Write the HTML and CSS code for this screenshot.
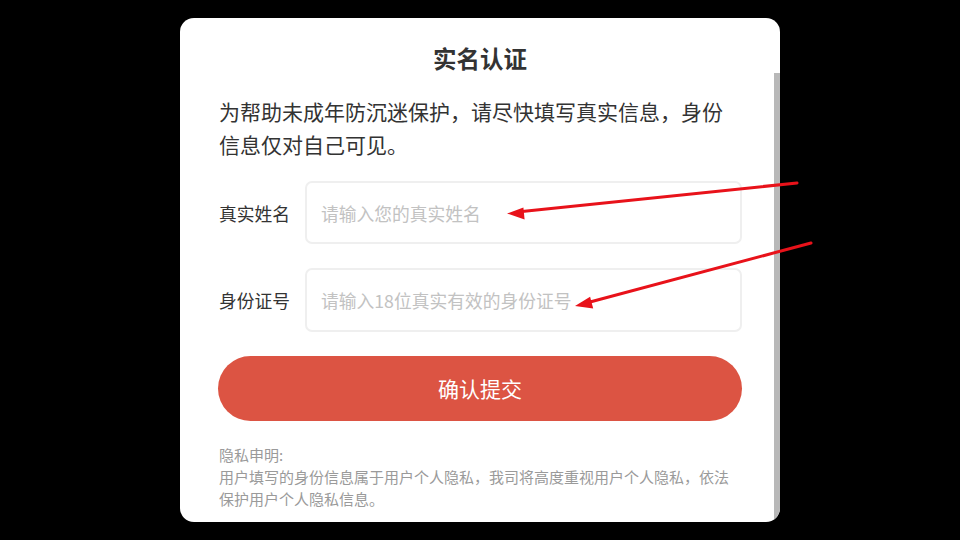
FILE: index.html
```html
<!DOCTYPE html>
<html lang="zh-CN">
<head>
<meta charset="utf-8">
<title>实名认证</title>
<link rel="stylesheet" href="styles.css">
</head>
<body>
<div class="stage">
  <div class="card">
    <h1 class="title">实名认证</h1>
    <p class="intro">为帮助未成年防沉迷保护，请尽快填写真实信息，身份信息仅对自己可见。</p>
    <div class="form">
      <div class="row">
        <label class="label">真实姓名</label>
        <div class="field"><span class="placeholder">请输入您的真实姓名</span></div>
      </div>
      <div class="row">
        <label class="label">身份证号</label>
        <div class="field"><span class="placeholder">请输入18位真实有效的身份证号</span></div>
      </div>
      <button class="submit">确认提交</button>
    </div>
    <div class="privacy">
      <div>隐私申明:</div>
      <div>用户填写的身份信息属于用户个人隐私，我司将高度重视用户个人隐私，依法保护用户个人隐私信息。</div>
    </div>
    <div class="scrollbar"></div>
  </div>
  <svg class="arrows" width="960" height="540" viewBox="0 0 960 540">
    <g fill="#e8121a" stroke="#e8121a">
      <line x1="797" y1="183" x2="522" y2="211.5" stroke-width="3" stroke-linecap="round"/>
      <polygon points="507,213.5 524.6,219.4 523.4,207.4" stroke="none"/>
      <line x1="811" y1="243" x2="590" y2="302" stroke-width="3" stroke-linecap="round"/>
      <polygon points="575,306 593.2,308.4 590.1,296.8" stroke="none"/>
    </g>
  </svg>
</div>
</body>
</html>
```

FILE: styles.css
```css
* { box-sizing: border-box; }
html, body {
  margin: 0;
  padding: 0;
  background: #000;
  font-family: "Noto Sans CJK SC", "Noto Sans", sans-serif;
}
.stage {
  position: relative;
  width: 960px;
  height: 540px;
  overflow: hidden;
  padding-top: 18px;
}
.card {
  position: relative;
  width: 600px;
  height: 504px;
  margin: 0 auto;
  background: #fff;
  border-radius: 14px;
  overflow: hidden;
  padding: 25px 38px 0 38px;
}
.title {
  margin: 0;
  text-align: center;
  font-size: 23.5px;
  line-height: 30px;
  font-weight: 700;
  color: #333;
}
.intro {
  margin: 22px 0 0 0;
  font-size: 21px;
  line-height: 33px;
  color: #333;
  padding-left: 1px;
}
.form {
  margin-top: 20px;
  display: flex;
  flex-direction: column;
  gap: 24px;
}
.row {
  display: flex;
  align-items: center;
  gap: 15px;
  padding-left: 1px;
}
.label {
  width: 71px;
  font-size: 17.75px;
  line-height: 24px;
  color: #333;
  white-space: nowrap;
}
.field {
  flex: 1;
  height: 63px;
  border: 2px solid #efefef;
  border-radius: 7px;
  display: flex;
  align-items: center;
  padding-left: 14px;
}
.row + .row .field { height: 64px; }
.placeholder {
  font-size: 17.75px;
  color: #c2c2c2;
}
.submit {
  height: 65px;
  width: 100%;
  border: none;
  border-radius: 33px;
  background: #dc5443;
  color: #fff;
  font-family: inherit;
  font-size: 21px;
  padding: 0 0 2px 0;
}
.privacy {
  margin-top: 23px;
  font-size: 15px;
  line-height: 22px;
  color: #9a9a9a;
  padding-left: 1px;
  padding-right: 10px;
}
.scrollbar {
  position: absolute;
  right: 0;
  top: 55px;
  bottom: 0;
  width: 6px;
  background: #b8b8b8;
}
.arrows {
  position: absolute;
  left: 0;
  top: 0;
}
```
